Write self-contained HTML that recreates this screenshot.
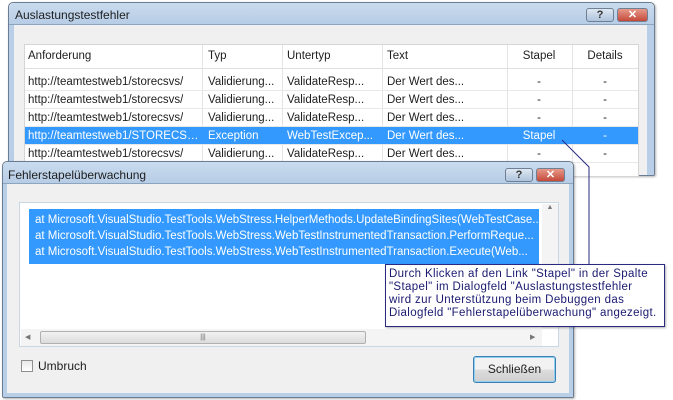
<!DOCTYPE html>
<html><head><meta charset="utf-8"><style>
*{margin:0;padding:0;box-sizing:border-box}
body{width:673px;height:400px;background:#fff;position:relative;overflow:hidden;font-family:"Liberation Sans",sans-serif;font-size:11.5px;color:#1e1e1e}
.abs{position:absolute}
.win{position:absolute;background:#f0f0f0;border:1px solid #6b7d94;border-radius:5px 5px 2px 2px;box-shadow:1px 1px 2px rgba(0,0,0,.3)}
.tb{position:absolute;left:0;right:0;top:0;background:linear-gradient(#c9dbee,#b7cde6);border-bottom:1px solid #8ea5c0}
.frame{position:absolute;background:#b9cfe8}
.btn{position:absolute;height:14px;border:1px solid #6f7f94;border-radius:3px;font-size:11px;font-weight:bold;text-align:center;line-height:12px}
.help{background:linear-gradient(#dfe8f3,#aec3dc);color:#333}
.close{background:linear-gradient(#e79a8a,#c4493a);color:#fff}
.row{position:absolute;left:0;right:0;height:18px;border-bottom:1px solid #e8e8e8;line-height:18px}
.c{position:absolute;top:0;white-space:nowrap;overflow:hidden;text-overflow:ellipsis}
.sel{background:#3399ff;color:#fff}
</style></head><body>

<div class="win" style="left:8px;top:2px;width:647px;height:174px">
 <div class="tb" style="height:22px;border-radius:5px 5px 0 0"></div>
 <div class="abs" style="left:6px;top:5px;font-size:12px">Auslastungstestfehler</div>
 <div class="btn help" style="left:577px;top:5px;width:28px">?</div>
 <div class="btn close" style="left:608px;top:5px;width:31px">✕</div>
 <div class="frame" style="left:0;top:22px;width:5px;bottom:0"></div>
 <div class="frame" style="right:0;top:22px;width:7px;bottom:0"></div>
 <div class="abs" style="left:15px;top:41px;width:615px;height:133px;background:#fff;border:1px solid #d5d5d5;overflow:hidden">
  <div class="row" style="top:0;height:24px;line-height:22px;border-bottom:1px solid #e0e0e0">
   <div class="c" style="left:3px">Anforderung</div>
   <div class="c" style="left:183px">Typ</div>
   <div class="c" style="left:262px">Untertyp</div>
   <div class="c" style="left:362px">Text</div>
   <div class="c" style="left:482px;width:64px;text-align:center">Stapel</div>
   <div class="c" style="left:547px;width:66px;text-align:center">Details</div>
  </div>
  <div class="abs" style="left:177px;top:0;width:1px;height:133px;background:#e4e4e4"></div>
  <div class="abs" style="left:257px;top:0;width:1px;height:133px;background:#e4e4e4"></div>
  <div class="abs" style="left:357px;top:0;width:1px;height:133px;background:#e4e4e4"></div>
  <div class="abs" style="left:482px;top:0;width:1px;height:133px;background:#e4e4e4"></div>
  <div class="abs" style="left:547px;top:0;width:1px;height:133px;background:#e4e4e4"></div>
  <div class="row" style="top:28px"><div class="c" style="left:3px">http://teamtestweb1/storecsvs/</div><div class="c" style="left:183px">Validierung...</div><div class="c" style="left:262px">ValidateResp...</div><div class="c" style="left:362px">Der Wert des...</div><div class="c" style="left:482px;width:64px;text-align:center">-</div><div class="c" style="left:547px;width:66px;text-align:center">-</div></div>
  <div class="row" style="top:46px"><div class="c" style="left:3px">http://teamtestweb1/storecsvs/</div><div class="c" style="left:183px">Validierung...</div><div class="c" style="left:262px">ValidateResp...</div><div class="c" style="left:362px">Der Wert des...</div><div class="c" style="left:482px;width:64px;text-align:center">-</div><div class="c" style="left:547px;width:66px;text-align:center">-</div></div>
  <div class="row" style="top:64px"><div class="c" style="left:3px">http://teamtestweb1/storecsvs/</div><div class="c" style="left:183px">Validierung...</div><div class="c" style="left:262px">ValidateResp...</div><div class="c" style="left:362px">Der Wert des...</div><div class="c" style="left:482px;width:64px;text-align:center">-</div><div class="c" style="left:547px;width:66px;text-align:center">-</div></div>
  <div class="row sel" style="top:82px"><div class="c" style="left:3px;width:173px">http://teamtestweb1/STORECSVS/storecsvs</div><div class="c" style="left:183px">Exception</div><div class="c" style="left:262px">WebTestExcep...</div><div class="c" style="left:362px">Der Wert des...</div><div class="c" style="left:482px;width:64px;text-align:center">Stapel</div><div class="c" style="left:547px;width:66px;text-align:center">-</div></div>
  <div class="row" style="top:100px"><div class="c" style="left:3px">http://teamtestweb1/storecsvs/</div><div class="c" style="left:183px">Validierung...</div><div class="c" style="left:262px">ValidateResp...</div><div class="c" style="left:362px">Der Wert des...</div><div class="c" style="left:482px;width:64px;text-align:center">-</div><div class="c" style="left:547px;width:66px;text-align:center">-</div></div>
 </div>
</div>

<svg class="abs" style="left:0;top:0" width="673" height="400"><polyline points="562,140 589,167 589,265" fill="none" stroke="#2a2a80" stroke-width="1"/></svg>

<div class="win" style="left:2px;top:161px;width:572px;height:237px">
 <div class="tb" style="height:22px;border-radius:5px 5px 0 0"></div>
 <div class="abs" style="left:5px;top:6px;font-size:12px">Fehlerstapelüberwachung</div>
 <div class="btn help" style="left:502px;top:6px;width:28px">?</div>
 <div class="btn close" style="left:533px;top:6px;width:29px">✕</div>
 <div class="frame" style="left:0;top:22px;width:4px;bottom:0"></div>
 <div class="frame" style="right:0;top:22px;width:4px;bottom:0"></div>
 <div class="frame" style="left:0;right:0;height:4px;bottom:0"></div>
 <div class="abs" style="left:16px;top:40px;width:540px;height:145px;background:#fff;border:1px solid #c9d6e4">
  <div class="abs sel" style="left:9px;top:6px;width:510px;height:55px;line-height:16px;padding:3px 0 0 6px;white-space:nowrap;overflow:hidden">at Microsoft.VisualStudio.TestTools.WebStress.HelperMethods.UpdateBindingSites(WebTestCase...<br>at Microsoft.VisualStudio.TestTools.WebStress.WebTestInstrumentedTransaction.PerformReque...<br>at Microsoft.VisualStudio.TestTools.WebStress.WebTestInstrumentedTransaction.Execute(Web...</div>
  <div class="abs" style="left:522px;top:1px;width:16px;height:125px;background:#f4f4f4;font-size:7px;color:#777;text-align:center">▲</div>
  <div class="abs" style="left:1px;top:126px;width:521px;height:17px;background:#f4f4f4"></div>
  <div class="abs" style="left:5px;top:130px;font-size:7px;color:#777">◀</div>
  <div class="abs" style="left:510px;top:130px;font-size:7px;color:#777">▶</div>
  <div class="abs" style="left:20px;top:128px;width:326px;height:13px;border:1px solid #b0b0b0;border-radius:2px;background:linear-gradient(#f2f2f2,#dcdcdc);font-size:7px;text-align:center;color:#666;line-height:11px">|||</div>
 </div>
 <div class="abs" style="left:18px;top:198px;width:12px;height:12px;border:1px solid #8e8f8f;background:linear-gradient(#e8e8e8,#fff)"></div>
 <div class="abs" style="left:35px;top:197px;font-size:12px">Umbruch</div>
 <div class="abs" style="left:470px;top:194px;width:83px;height:27px;border:1px solid #3c7fb1;border-radius:3px;background:linear-gradient(#f2f2f2 50%,#dddddd 50%,#cfcfcf);box-shadow:inset 0 0 0 1px #8fd0f0;text-align:center;line-height:25px;font-size:12px">Schließen</div>
</div>

<div class="abs" style="left:385px;top:264px;width:280px;height:63px;border:1px solid #2a2a80;background:#fff;box-shadow:1px 1px 2px rgba(0,0,0,.3);color:#1a1a70;font-size:11.5px;letter-spacing:0.35px;line-height:13px;padding:3px 0 0 3px;white-space:nowrap;overflow:hidden">Durch Klicken af den Link "Stapel" in der Spalte<br>"Stapel" im Dialogfeld "Auslastungstestfehler<br>wird zur Unterstützung beim Debuggen das<br>Dialogfeld "Fehlerstapelüberwachung" angezeigt.</div>
</body></html>
